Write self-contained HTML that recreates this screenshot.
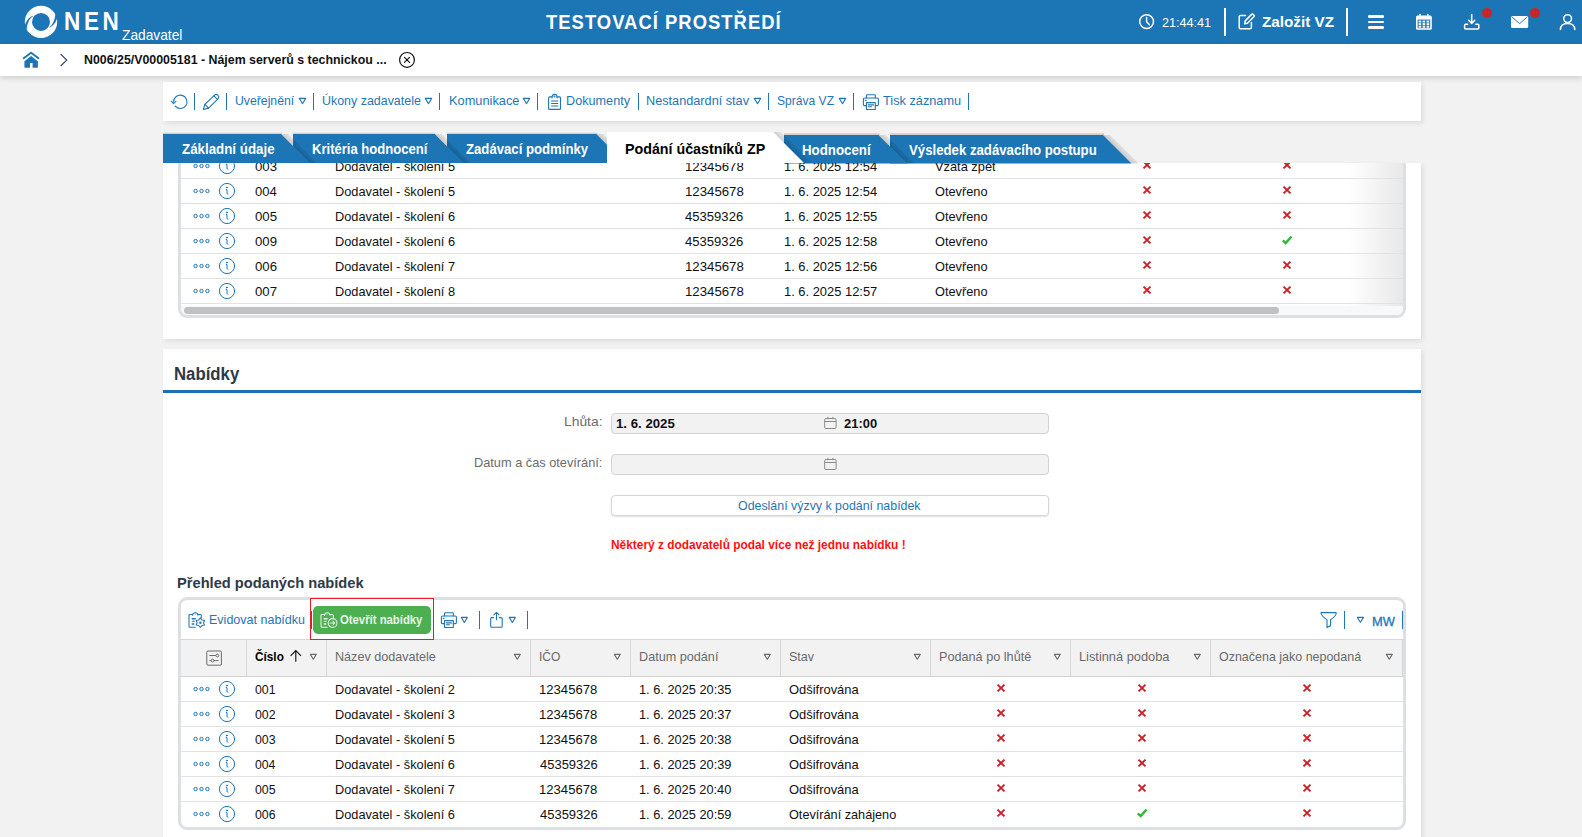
<!DOCTYPE html>
<html lang="cs"><head><meta charset="utf-8"><title>NEN - Zadavatel</title>
<style>
html,body{margin:0;padding:0}
body{width:1582px;height:837px;overflow:hidden;background:#f2f2f2;font-family:"Liberation Sans", sans-serif;position:relative}
#root{position:absolute;left:0;top:0;width:1582px;height:837px;overflow:hidden}
#root div,#root svg{position:absolute;box-sizing:border-box}
#root span{position:absolute;white-space:nowrap;line-height:1;display:block;transform-origin:0 0}
</style></head><body><div id="root">
<div style="left:0px;top:0px;width:1582px;height:44px;background:#1c75b4"></div>
<svg style="left:22px;top:3px" width="38" height="38" viewBox="22 3 38 38">
<circle cx="41" cy="21.9" r="12.6" fill="none" stroke="#fff" stroke-width="7.2"/>
<path d="M24.2 28.2 C25.5 21.5 28.5 17.5 33.6 15.6 C29.6 18.6 27.4 22.4 26.6 29.5 Z" fill="#1c75b4"/>
<path d="M57.8 15.6 C56.5 22.3 53.5 26.3 48.4 28.2 C52.4 25.2 54.6 21.4 55.4 14.3 Z" fill="#1c75b4"/>
</svg>
<svg style="left:1137px;top:12px" width="20" height="20" viewBox="0 0 20 20" fill="none" stroke="#fff" stroke-width="1.5" stroke-linecap="round">
<circle cx="9.6" cy="9.6" r="6.9"/><path d="M9.6 5.6 V9.8 L12.2 12.6"/></svg>
<div style="left:1224px;top:8px;width:2px;height:28px;background:#fff"></div>
<svg style="left:1237px;top:12px" width="20" height="20" viewBox="0 0 20 20" fill="none" stroke="#fff" stroke-width="1.5" stroke-linejoin="round" stroke-linecap="round">
<path d="M8.5 3.6 H3.4 Q2.2 3.6 2.2 4.8 V15.6 Q2.2 16.8 3.4 16.8 H13.2 Q14.4 16.8 14.4 15.6 V10.5"/>
<path d="M7.6 11.8 L8.2 8.9 L14.6 2.4 Q15.4 1.7 16.3 2.5 L16.9 3.1 Q17.6 3.9 16.9 4.7 L10.4 11.2 Z"/></svg>
<div style="left:1346px;top:8px;width:2px;height:28px;background:#fff"></div>
<div style="left:1368px;top:15.3px;width:16.4px;height:2.7px;background:#fff;border-radius:1.3px"></div>
<div style="left:1368px;top:20.8px;width:16.4px;height:2.7px;background:#fff;border-radius:1.3px"></div>
<div style="left:1368px;top:26.3px;width:16.4px;height:2.7px;background:#fff;border-radius:1.3px"></div>
<svg style="left:1415px;top:13px" width="18" height="18" viewBox="0 0 18 18">
<rect x="1" y="2.6" width="15.8" height="14.2" rx="1.6" fill="#fff"/>
<rect x="4.2" y="0.8" width="1.6" height="3.6" rx=".8" fill="#fff"/><rect x="12" y="0.8" width="1.6" height="3.6" rx=".8" fill="#fff"/>
<rect x="2.6" y="6.6" width="12.6" height="8.6" fill="#1c75b4"/>
<g fill="#fff"><rect x="3.6" y="7.6" width="2.6" height="1.9"/><rect x="7.6" y="7.6" width="2.6" height="1.9"/><rect x="11.6" y="7.6" width="2.6" height="1.9"/>
<rect x="3.6" y="10.2" width="2.6" height="1.9"/><rect x="7.6" y="10.2" width="2.6" height="1.9"/><rect x="11.6" y="10.2" width="2.6" height="1.9"/>
<rect x="3.6" y="12.8" width="2.6" height="1.9"/><rect x="7.6" y="12.8" width="2.6" height="1.9"/><rect x="11.6" y="12.8" width="2.6" height="1.9"/></g></svg>
<svg style="left:1463px;top:13px" width="18" height="18" viewBox="0 0 18 18" fill="none" stroke="#fff" stroke-width="1.5" stroke-linecap="round" stroke-linejoin="round">
<path d="M8.7 1.6 V10.2 M5.6 7.3 L8.7 10.4 L11.8 7.3"/>
<path d="M4.6 11.2 H2.6 Q1.6 11.2 1.6 12.2 V15 Q1.6 16 2.6 16 H14.8 Q15.8 16 15.8 15 V12.2 Q15.8 11.2 14.8 11.2 H12.8"/></svg>
<div style="left:1482px;top:8px;width:10.4px;height:10.4px;background:#c62828;border-radius:50%"></div>
<svg style="left:1510px;top:15px" width="20" height="14" viewBox="0 0 20 14">
<rect x="1" y="1" width="17.2" height="12" rx="1.6" fill="#fff"/>
<path d="M2 2 L9.6 8.6 L17.2 2" fill="none" stroke="#1c75b4" stroke-width="1"/></svg>
<div style="left:1530px;top:8px;width:10.4px;height:10.4px;background:#c62828;border-radius:50%"></div>
<svg style="left:1558px;top:13px" width="20" height="18" viewBox="0 0 20 18" fill="none" stroke="#fff" stroke-width="1.5" stroke-linecap="round">
<circle cx="9.6" cy="5.6" r="3.9"/><path d="M2.4 16.6 Q2.6 10.6 9.6 10.6 Q16.6 10.6 16.8 16.6"/></svg>
<div style="left:0px;top:44px;width:1582px;height:32px;background:#fff;box-shadow:0 2px 6px rgba(0,0,0,.16)"></div>
<svg style="left:22px;top:51px" width="18" height="18" viewBox="0 0 18 18">
<path d="M1.7 7.2 L9.1 1.75 L16.5 7.2" fill="none" stroke="#1c75b4" stroke-width="1.9" stroke-linecap="round" stroke-linejoin="round"/>
<path d="M2.4 10.2 L9.1 5.05 L15.9 10.2 V16.1 Q15.9 16.8 15.2 16.8 H10.6 V11.9 H8 V16.8 H3.1 Q2.4 16.8 2.4 16.1 Z" fill="#1c75b4"/></svg>
<svg style="left:59px;top:53px" width="10" height="15" viewBox="0 0 10 15"><path d="M1.7 1.1 L7.7 7.1 L1.7 13" fill="none" stroke="#2f3b68" stroke-width="1.1"/></svg>
<svg style="left:398px;top:51px" width="18" height="18" viewBox="0 0 18 18" fill="none" stroke="#111" stroke-width="1.2" stroke-linecap="round">
<circle cx="9" cy="8.9" r="7.4"/><path d="M6.5 6.4 L11.5 11.4 M11.5 6.4 L6.5 11.4"/></svg>
<div style="left:163px;top:82px;width:1258px;height:39px;background:#fff;box-shadow:2px 2px 5px rgba(0,0,0,.09)"></div>
<svg style="left:170px;top:92px" width="20" height="20" viewBox="170 92 20 20" fill="none" stroke="#1f76b6" stroke-width="1.1" stroke-linecap="round" stroke-linejoin="round">
<path d="M173.6 102 A6.7 6.7 0 1 1 175.2 106.2"/><path d="M171.2 101.2 L173.5 103.6 L176 101.4"/></svg>
<div style="left:194px;top:93px;width:1px;height:17px;background:#1f76b6"></div>
<svg style="left:201px;top:92px" width="20" height="20" viewBox="201 92 20 20" fill="none" stroke="#1f76b6" stroke-width="1.1" stroke-linecap="round" stroke-linejoin="round">
<path d="M203.3 109.5 L204.9 104.3 L214.6 95.1 Q216.4 93.7 218 95.3 Q219.6 96.9 218.2 98.6 L208.6 108.1 Z"/>
<path d="M204.9 104.3 L208.6 108.1 M213.9 95.8 L217.5 99.3"/></svg>
<div style="left:226px;top:93px;width:1px;height:17px;background:#1f76b6"></div>
<svg style="left:297.6px;top:97.2px" width="9" height="8" viewBox="-1 -1 9 8"><path d="M0.3 0.4 H6.7 L3.5 5.7 Z" fill="none" stroke="#1f76b6" stroke-width="1.1" stroke-linejoin="round"/></svg>
<div style="left:313px;top:93px;width:1px;height:17px;background:#1f76b6"></div>
<svg style="left:424.2px;top:97.2px" width="9" height="8" viewBox="-1 -1 9 8"><path d="M0.3 0.4 H6.7 L3.5 5.7 Z" fill="none" stroke="#1f76b6" stroke-width="1.1" stroke-linejoin="round"/></svg>
<div style="left:439px;top:93px;width:1px;height:17px;background:#1f76b6"></div>
<svg style="left:522.4px;top:97.2px" width="9" height="8" viewBox="-1 -1 9 8"><path d="M0.3 0.4 H6.7 L3.5 5.7 Z" fill="none" stroke="#1f76b6" stroke-width="1.1" stroke-linejoin="round"/></svg>
<div style="left:537px;top:93px;width:1px;height:17px;background:#1f76b6"></div>
<svg style="left:546px;top:92px" width="18" height="20" viewBox="546 92 18 20" fill="none" stroke="#1f76b6" stroke-width="1.1" stroke-linejoin="round" stroke-linecap="round">
<path d="M552 96.9 H549.6 Q548.6 96.9 548.6 97.9 V108.4 Q548.6 109.4 549.6 109.4 H559.5 Q560.5 109.4 560.5 108.4 V97.9 Q560.5 96.9 559.5 96.9 H557.2"/>
<path d="M552 97.9 Q552 94.4 554.6 94.4 Q557.2 94.4 557.2 97.9"/>
<path d="M551.6 101 H557.8 M551.6 103.5 H557.8 M551.6 106 H557.8"/><circle cx="554.6" cy="96.5" r=".4"/></svg>
<div style="left:638px;top:93px;width:1px;height:17px;background:#1f76b6"></div>
<svg style="left:752.8px;top:97.2px" width="9" height="8" viewBox="-1 -1 9 8"><path d="M0.3 0.4 H6.7 L3.5 5.7 Z" fill="none" stroke="#1f76b6" stroke-width="1.1" stroke-linejoin="round"/></svg>
<div style="left:768px;top:93px;width:1px;height:17px;background:#1f76b6"></div>
<svg style="left:838.2px;top:97.2px" width="9" height="8" viewBox="-1 -1 9 8"><path d="M0.3 0.4 H6.7 L3.5 5.7 Z" fill="none" stroke="#1f76b6" stroke-width="1.1" stroke-linejoin="round"/></svg>
<div style="left:853px;top:93px;width:1px;height:17px;background:#1f76b6"></div>
<svg style="left:862px;top:93px" width="18" height="18" viewBox="0 0 18 18" fill="none" stroke="#1f76b6" stroke-width="1.1" stroke-linejoin="round" stroke-linecap="round">
<path d="M4.5 5 V2.5 Q4.5 1.7 5.3 1.7 H12.5 Q13.3 1.7 13.3 2.5 V5"/>
<path d="M4.5 12.6 H2.5 Q1.4 12.6 1.4 11.5 V6.1 Q1.4 5 2.5 5 H15.3 Q16.4 5 16.4 6.1 V11.5 Q16.4 12.6 15.3 12.6 H13.3"/>
<path d="M4.5 9.6 H13.3 V16.5 H4.5 Z"/><path d="M6.3 11.9 H11.5 M6.3 13.8 H9.6 M3.3 7.4 H4.1"/></svg>
<div style="left:968px;top:93px;width:1px;height:17px;background:#1f76b6"></div>
<div style="left:163px;top:163px;width:1258px;height:176px;background:#fff;box-shadow:2px 2px 5px rgba(0,0,0,.09)"></div>
<div style="left:163px;top:163px;width:1258px;height:176px;overflow:hidden"><div style="left:15px;top:-23px;width:1228px;height:178px;border:3px solid #dde0e2;border-radius:9px;background:#fff;overflow:hidden"><div style="left:1167px;top:0;width:55px;height:163px;background:linear-gradient(90deg,rgba(236,236,236,0),rgba(232,232,232,1))"></div><div style="left:0;top:163px;width:1222px;height:9px;background:#f8f8f8"></div><div style="left:3px;top:163.6px;width:1095px;height:7.8px;border-radius:4px;background:#c1c1c1"></div></div></div>
<div style="left:181px;top:178px;width:1222px;height:1px;background:#e2e2e2"></div>
<svg style="left:192.6px;top:161.6px" width="18" height="8" viewBox="0 0 18 8" fill="none" stroke="#1f76b6" stroke-width="1"><circle cx="2.6" cy="4" r="1.7"/><circle cx="8.5" cy="4" r="1.7"/><circle cx="14.4" cy="4" r="1.7"/></svg>
<svg style="left:218px;top:156.7px" width="18" height="18" viewBox="0 0 18 18" fill="none" stroke="#1f76b6" stroke-width="1" stroke-linecap="round"><circle cx="9" cy="9" r="7.6"/><path d="M8.2 7.6 H9 V11.4 Q9 12.2 10 12.2" /><circle cx="8.9" cy="5.6" r=".5" fill="#1f76b6"/></svg>
<svg style="left:1141.2px;top:159px;clip-path:inset(4px 0 0 0)" width="12" height="12" viewBox="-6 -6 12 12"><path d="M-3.5 -3.4 L3.5 3.4 M3.5 -3.4 L-3.5 3.4" stroke="#cc2028" stroke-width="2" fill="none"/></svg>
<svg style="left:1281.3px;top:159px;clip-path:inset(4px 0 0 0)" width="12" height="12" viewBox="-6 -6 12 12"><path d="M-3.5 -3.4 L3.5 3.4 M3.5 -3.4 L-3.5 3.4" stroke="#cc2028" stroke-width="2" fill="none"/></svg>
<div style="left:181px;top:203px;width:1222px;height:1px;background:#e2e2e2"></div>
<svg style="left:192.6px;top:186.6px" width="18" height="8" viewBox="0 0 18 8" fill="none" stroke="#1f76b6" stroke-width="1"><circle cx="2.6" cy="4" r="1.7"/><circle cx="8.5" cy="4" r="1.7"/><circle cx="14.4" cy="4" r="1.7"/></svg>
<svg style="left:218px;top:181.7px" width="18" height="18" viewBox="0 0 18 18" fill="none" stroke="#1f76b6" stroke-width="1" stroke-linecap="round"><circle cx="9" cy="9" r="7.6"/><path d="M8.2 7.6 H9 V11.4 Q9 12.2 10 12.2" /><circle cx="8.9" cy="5.6" r=".5" fill="#1f76b6"/></svg>
<svg style="left:1141.2px;top:184px" width="12" height="12" viewBox="-6 -6 12 12"><path d="M-3.5 -3.4 L3.5 3.4 M3.5 -3.4 L-3.5 3.4" stroke="#cc2028" stroke-width="2" fill="none"/></svg>
<svg style="left:1281.3px;top:184px" width="12" height="12" viewBox="-6 -6 12 12"><path d="M-3.5 -3.4 L3.5 3.4 M3.5 -3.4 L-3.5 3.4" stroke="#cc2028" stroke-width="2" fill="none"/></svg>
<div style="left:181px;top:228px;width:1222px;height:1px;background:#e2e2e2"></div>
<svg style="left:192.6px;top:211.6px" width="18" height="8" viewBox="0 0 18 8" fill="none" stroke="#1f76b6" stroke-width="1"><circle cx="2.6" cy="4" r="1.7"/><circle cx="8.5" cy="4" r="1.7"/><circle cx="14.4" cy="4" r="1.7"/></svg>
<svg style="left:218px;top:206.7px" width="18" height="18" viewBox="0 0 18 18" fill="none" stroke="#1f76b6" stroke-width="1" stroke-linecap="round"><circle cx="9" cy="9" r="7.6"/><path d="M8.2 7.6 H9 V11.4 Q9 12.2 10 12.2" /><circle cx="8.9" cy="5.6" r=".5" fill="#1f76b6"/></svg>
<svg style="left:1141.2px;top:209px" width="12" height="12" viewBox="-6 -6 12 12"><path d="M-3.5 -3.4 L3.5 3.4 M3.5 -3.4 L-3.5 3.4" stroke="#cc2028" stroke-width="2" fill="none"/></svg>
<svg style="left:1281.3px;top:209px" width="12" height="12" viewBox="-6 -6 12 12"><path d="M-3.5 -3.4 L3.5 3.4 M3.5 -3.4 L-3.5 3.4" stroke="#cc2028" stroke-width="2" fill="none"/></svg>
<div style="left:181px;top:253px;width:1222px;height:1px;background:#e2e2e2"></div>
<svg style="left:192.6px;top:236.6px" width="18" height="8" viewBox="0 0 18 8" fill="none" stroke="#1f76b6" stroke-width="1"><circle cx="2.6" cy="4" r="1.7"/><circle cx="8.5" cy="4" r="1.7"/><circle cx="14.4" cy="4" r="1.7"/></svg>
<svg style="left:218px;top:231.7px" width="18" height="18" viewBox="0 0 18 18" fill="none" stroke="#1f76b6" stroke-width="1" stroke-linecap="round"><circle cx="9" cy="9" r="7.6"/><path d="M8.2 7.6 H9 V11.4 Q9 12.2 10 12.2" /><circle cx="8.9" cy="5.6" r=".5" fill="#1f76b6"/></svg>
<svg style="left:1141.2px;top:234px" width="12" height="12" viewBox="-6 -6 12 12"><path d="M-3.5 -3.4 L3.5 3.4 M3.5 -3.4 L-3.5 3.4" stroke="#cc2028" stroke-width="2" fill="none"/></svg>
<svg style="left:1280.3px;top:234px" width="14" height="12" viewBox="-7 -6 14 12"><path d="M-4.2 0.4 L-1.3 3 L4.5 -3.5" stroke="#2db534" stroke-width="2.3" fill="none"/></svg>
<div style="left:181px;top:278px;width:1222px;height:1px;background:#e2e2e2"></div>
<svg style="left:192.6px;top:261.6px" width="18" height="8" viewBox="0 0 18 8" fill="none" stroke="#1f76b6" stroke-width="1"><circle cx="2.6" cy="4" r="1.7"/><circle cx="8.5" cy="4" r="1.7"/><circle cx="14.4" cy="4" r="1.7"/></svg>
<svg style="left:218px;top:256.7px" width="18" height="18" viewBox="0 0 18 18" fill="none" stroke="#1f76b6" stroke-width="1" stroke-linecap="round"><circle cx="9" cy="9" r="7.6"/><path d="M8.2 7.6 H9 V11.4 Q9 12.2 10 12.2" /><circle cx="8.9" cy="5.6" r=".5" fill="#1f76b6"/></svg>
<svg style="left:1141.2px;top:259px" width="12" height="12" viewBox="-6 -6 12 12"><path d="M-3.5 -3.4 L3.5 3.4 M3.5 -3.4 L-3.5 3.4" stroke="#cc2028" stroke-width="2" fill="none"/></svg>
<svg style="left:1281.3px;top:259px" width="12" height="12" viewBox="-6 -6 12 12"><path d="M-3.5 -3.4 L3.5 3.4 M3.5 -3.4 L-3.5 3.4" stroke="#cc2028" stroke-width="2" fill="none"/></svg>
<div style="left:181px;top:303px;width:1222px;height:1px;background:#e2e2e2"></div>
<svg style="left:192.6px;top:286.6px" width="18" height="8" viewBox="0 0 18 8" fill="none" stroke="#1f76b6" stroke-width="1"><circle cx="2.6" cy="4" r="1.7"/><circle cx="8.5" cy="4" r="1.7"/><circle cx="14.4" cy="4" r="1.7"/></svg>
<svg style="left:218px;top:281.7px" width="18" height="18" viewBox="0 0 18 18" fill="none" stroke="#1f76b6" stroke-width="1" stroke-linecap="round"><circle cx="9" cy="9" r="7.6"/><path d="M8.2 7.6 H9 V11.4 Q9 12.2 10 12.2" /><circle cx="8.9" cy="5.6" r=".5" fill="#1f76b6"/></svg>
<svg style="left:1141.2px;top:284px" width="12" height="12" viewBox="-6 -6 12 12"><path d="M-3.5 -3.4 L3.5 3.4 M3.5 -3.4 L-3.5 3.4" stroke="#cc2028" stroke-width="2" fill="none"/></svg>
<svg style="left:1281.3px;top:284px" width="12" height="12" viewBox="-6 -6 12 12"><path d="M-3.5 -3.4 L3.5 3.4 M3.5 -3.4 L-3.5 3.4" stroke="#cc2028" stroke-width="2" fill="none"/></svg>
<svg style="left:884.2px;top:128px" width="265.0" height="37" viewBox="884.2 128 265.0 37"><defs><linearGradient id="sg890" gradientUnits="userSpaceOnUse" x1="1103.2" y1="135" x2="1109.2" y2="129"><stop offset="0" stop-color="#000" stop-opacity=".17"/><stop offset="1" stop-color="#000" stop-opacity="0"/></linearGradient></defs><path d="M1103.2 135 L1132.2 163.6 L1139.2 163.6 L1110.2 135 Z" fill="url(#sg890)"/><path d="M890.2 134.4 H1104.2" stroke="#cdc5bd" stroke-width="2.2" opacity=".8"/><path d="M890.2 135 H1103.2 L1131.8 163.6 H890.2 Z" fill="#1c75b4"/></svg>
<svg style="left:778px;top:128px" width="146.5" height="37" viewBox="778 128 146.5 37"><defs><linearGradient id="sg784" gradientUnits="userSpaceOnUse" x1="878.5" y1="135" x2="884.5" y2="129"><stop offset="0" stop-color="#000" stop-opacity=".17"/><stop offset="1" stop-color="#000" stop-opacity="0"/></linearGradient></defs><path d="M878.5 135 L907.5 163.6 L914.5 163.6 L885.5 135 Z" fill="url(#sg784)"/><path d="M784 134.4 H879.5" stroke="#cdc5bd" stroke-width="2.2" opacity=".8"/><path d="M784 135 H878.5 L907.0999999999999 163.6 H784 Z" fill="#1c75b4"/></svg>
<svg style="left:440.7px;top:128px" width="201.3" height="37" viewBox="440.7 128 201.3 37"><defs><linearGradient id="sg446" gradientUnits="userSpaceOnUse" x1="596" y1="134" x2="602" y2="128"><stop offset="0" stop-color="#000" stop-opacity=".17"/><stop offset="1" stop-color="#000" stop-opacity="0"/></linearGradient></defs><path d="M596 134 L625 163.0 L632 163.0 L603 134 Z" fill="url(#sg446)"/><path d="M446.7 133.4 H597" stroke="#cdc5bd" stroke-width="1.2" opacity=".8"/><path d="M446.7 134 H596 L625.0 163.0 H446.7 Z" fill="#1c75b4"/></svg>
<svg style="left:287px;top:128px" width="193.60000000000002" height="37" viewBox="287 128 193.60000000000002 37"><defs><linearGradient id="sg293" gradientUnits="userSpaceOnUse" x1="434.6" y1="134" x2="440.6" y2="128"><stop offset="0" stop-color="#000" stop-opacity=".17"/><stop offset="1" stop-color="#000" stop-opacity="0"/></linearGradient></defs><path d="M434.6 134 L463.6 163.0 L470.6 163.0 L441.6 134 Z" fill="url(#sg293)"/><path d="M293 133.4 H435.6" stroke="#cdc5bd" stroke-width="1.2" opacity=".8"/><path d="M293 134 H434.6 L463.6 163.0 H293 Z" fill="#1c75b4"/></svg>
<svg style="left:157px;top:128px" width="170" height="37" viewBox="157 128 170 37"><defs><linearGradient id="sg163" gradientUnits="userSpaceOnUse" x1="281" y1="134" x2="287" y2="128"><stop offset="0" stop-color="#000" stop-opacity=".17"/><stop offset="1" stop-color="#000" stop-opacity="0"/></linearGradient></defs><path d="M281 134 L310 163.0 L317 163.0 L288 134 Z" fill="url(#sg163)"/><path d="M163 133.4 H282" stroke="#cdc5bd" stroke-width="1.2" opacity=".8"/><path d="M163 134 H281 L310.0 163.0 H163 Z" fill="#1c75b4"/></svg>
<svg style="left:600px;top:126px" width="215" height="38" viewBox="600 126 215 38"><defs><linearGradient id="sga" gradientUnits="userSpaceOnUse" x1="773" y1="132" x2="779" y2="126"><stop offset="0" stop-color="#000" stop-opacity=".15"/><stop offset="1" stop-color="#000" stop-opacity="0"/></linearGradient></defs><path d="M773 132 L804 163 L812 163 L781 132 Z" fill="url(#sga)"/><path d="M607 132 H773 L804 163 H607 Z" fill="#fff"/></svg>
<div style="left:163px;top:349px;width:1258px;height:500px;background:#fff;box-shadow:2px 2px 5px rgba(0,0,0,.09)"></div>
<div style="left:163px;top:390px;width:1258px;height:3px;background:#1a70b2"></div>
<div style="left:611px;top:413px;width:438px;height:21px;border:1px solid #d2d2d2;border-radius:4px;background:#f2f2f2"></div>
<div style="left:611px;top:454px;width:438px;height:21px;border:1px solid #d2d2d2;border-radius:4px;background:#f2f2f2"></div>
<svg style="left:822.5px;top:416px" width="14" height="14" viewBox="0 0 14 14" fill="none" stroke="#8a8a8a" stroke-width="1"><rect x="1.7" y="2.5" width="11.4" height="10" rx="1.2"/><path d="M1.7 5.5 H13.1 M4.9 .9 V3.2 M9.9 .9 V3.2"/></svg>
<svg style="left:822.5px;top:457px" width="14" height="14" viewBox="0 0 14 14" fill="none" stroke="#8a8a8a" stroke-width="1"><rect x="1.7" y="2.5" width="11.4" height="10" rx="1.2"/><path d="M1.7 5.5 H13.1 M4.9 .9 V3.2 M9.9 .9 V3.2"/></svg>
<div style="left:611px;top:495px;width:438px;height:21px;border:1px solid #d6d6d6;border-radius:4px;background:#fff;box-shadow:0 1px 2px rgba(0,0,0,.12)"></div>
<div style="left:178px;top:597px;width:1228px;height:233px;border:3px solid #dde0e2;border-radius:9px;background:#fff"></div>
<div style="left:181px;top:639px;width:1222px;height:38px;background:#f2f2f2;border-top:1px solid #d6d6d6;border-bottom:1.5px solid #d0d0d0"></div>
<div style="left:246px;top:640px;width:1px;height:36px;background:#d6d6d6"></div>
<div style="left:326px;top:640px;width:1px;height:36px;background:#d6d6d6"></div>
<div style="left:530px;top:640px;width:1px;height:36px;background:#d6d6d6"></div>
<div style="left:630px;top:640px;width:1px;height:36px;background:#d6d6d6"></div>
<div style="left:780px;top:640px;width:1px;height:36px;background:#d6d6d6"></div>
<div style="left:930px;top:640px;width:1px;height:36px;background:#d6d6d6"></div>
<div style="left:1070px;top:640px;width:1px;height:36px;background:#d6d6d6"></div>
<div style="left:1210px;top:640px;width:1px;height:36px;background:#d6d6d6"></div>
<div style="left:1402px;top:640px;width:1px;height:36px;background:#d6d6d6"></div>
<svg style="left:205px;top:649px" width="18" height="18" viewBox="0 0 18 18" fill="none" stroke="#6a6a6a" stroke-width="1"><rect x="1.8" y="2" width="14.6" height="14.2" rx="1.2"/><path d="M4.4 6.5 H10.8 M4.4 11.6 H6.2 M9 11.6 H13.6"/><circle cx="12.3" cy="6.5" r="1.4"/><circle cx="7.6" cy="11.6" r="1.4"/></svg>
<svg style="left:289px;top:649px" width="14" height="14" viewBox="0 0 14 14" fill="none" stroke="#111" stroke-width="1.1"><path d="M6.8 1.6 V12.8 M1.6 6.8 L6.8 1.6 L12 6.8"/></svg>
<svg style="left:309px;top:652.6px" width="8.6" height="7.6" viewBox="-1 -1 8.6 7.6"><path d="M0.3 0.4 H6.3 L3.3 5.3 Z" fill="none" stroke="#6a6a6a" stroke-width="1.1" stroke-linejoin="round"/></svg>
<svg style="left:512.6px;top:652.6px" width="8.6" height="7.6" viewBox="-1 -1 8.6 7.6"><path d="M0.3 0.4 H6.3 L3.3 5.3 Z" fill="none" stroke="#6a6a6a" stroke-width="1.1" stroke-linejoin="round"/></svg>
<svg style="left:612.8px;top:652.6px" width="8.6" height="7.6" viewBox="-1 -1 8.6 7.6"><path d="M0.3 0.4 H6.3 L3.3 5.3 Z" fill="none" stroke="#6a6a6a" stroke-width="1.1" stroke-linejoin="round"/></svg>
<svg style="left:762.6px;top:652.6px" width="8.6" height="7.6" viewBox="-1 -1 8.6 7.6"><path d="M0.3 0.4 H6.3 L3.3 5.3 Z" fill="none" stroke="#6a6a6a" stroke-width="1.1" stroke-linejoin="round"/></svg>
<svg style="left:912.5px;top:652.6px" width="8.6" height="7.6" viewBox="-1 -1 8.6 7.6"><path d="M0.3 0.4 H6.3 L3.3 5.3 Z" fill="none" stroke="#6a6a6a" stroke-width="1.1" stroke-linejoin="round"/></svg>
<svg style="left:1052.5px;top:652.6px" width="8.6" height="7.6" viewBox="-1 -1 8.6 7.6"><path d="M0.3 0.4 H6.3 L3.3 5.3 Z" fill="none" stroke="#6a6a6a" stroke-width="1.1" stroke-linejoin="round"/></svg>
<svg style="left:1192.5px;top:652.6px" width="8.6" height="7.6" viewBox="-1 -1 8.6 7.6"><path d="M0.3 0.4 H6.3 L3.3 5.3 Z" fill="none" stroke="#6a6a6a" stroke-width="1.1" stroke-linejoin="round"/></svg>
<svg style="left:1384.7px;top:652.6px" width="8.6" height="7.6" viewBox="-1 -1 8.6 7.6"><path d="M0.3 0.4 H6.3 L3.3 5.3 Z" fill="none" stroke="#6a6a6a" stroke-width="1.1" stroke-linejoin="round"/></svg>
<div style="left:181px;top:701px;width:1222px;height:1px;background:#e2e2e2"></div>
<svg style="left:192.6px;top:685.1px" width="18" height="8" viewBox="0 0 18 8" fill="none" stroke="#1f76b6" stroke-width="1"><circle cx="2.6" cy="4" r="1.7"/><circle cx="8.5" cy="4" r="1.7"/><circle cx="14.4" cy="4" r="1.7"/></svg>
<svg style="left:218px;top:680.1px" width="18" height="18" viewBox="0 0 18 18" fill="none" stroke="#1f76b6" stroke-width="1" stroke-linecap="round"><circle cx="9" cy="9" r="7.6"/><path d="M8.2 7.6 H9 V11.4 Q9 12.2 10 12.2" /><circle cx="8.9" cy="5.6" r=".5" fill="#1f76b6"/></svg>
<svg style="left:995.2px;top:682.1px" width="12" height="12" viewBox="-6 -6 12 12"><path d="M-3.5 -3.4 L3.5 3.4 M3.5 -3.4 L-3.5 3.4" stroke="#cc2028" stroke-width="2" fill="none"/></svg>
<svg style="left:1135.6px;top:682.1px" width="12" height="12" viewBox="-6 -6 12 12"><path d="M-3.5 -3.4 L3.5 3.4 M3.5 -3.4 L-3.5 3.4" stroke="#cc2028" stroke-width="2" fill="none"/></svg>
<svg style="left:1301.3px;top:682.1px" width="12" height="12" viewBox="-6 -6 12 12"><path d="M-3.5 -3.4 L3.5 3.4 M3.5 -3.4 L-3.5 3.4" stroke="#cc2028" stroke-width="2" fill="none"/></svg>
<div style="left:181px;top:726px;width:1222px;height:1px;background:#e2e2e2"></div>
<svg style="left:192.6px;top:710.1px" width="18" height="8" viewBox="0 0 18 8" fill="none" stroke="#1f76b6" stroke-width="1"><circle cx="2.6" cy="4" r="1.7"/><circle cx="8.5" cy="4" r="1.7"/><circle cx="14.4" cy="4" r="1.7"/></svg>
<svg style="left:218px;top:705.1px" width="18" height="18" viewBox="0 0 18 18" fill="none" stroke="#1f76b6" stroke-width="1" stroke-linecap="round"><circle cx="9" cy="9" r="7.6"/><path d="M8.2 7.6 H9 V11.4 Q9 12.2 10 12.2" /><circle cx="8.9" cy="5.6" r=".5" fill="#1f76b6"/></svg>
<svg style="left:995.2px;top:707.1px" width="12" height="12" viewBox="-6 -6 12 12"><path d="M-3.5 -3.4 L3.5 3.4 M3.5 -3.4 L-3.5 3.4" stroke="#cc2028" stroke-width="2" fill="none"/></svg>
<svg style="left:1135.6px;top:707.1px" width="12" height="12" viewBox="-6 -6 12 12"><path d="M-3.5 -3.4 L3.5 3.4 M3.5 -3.4 L-3.5 3.4" stroke="#cc2028" stroke-width="2" fill="none"/></svg>
<svg style="left:1301.3px;top:707.1px" width="12" height="12" viewBox="-6 -6 12 12"><path d="M-3.5 -3.4 L3.5 3.4 M3.5 -3.4 L-3.5 3.4" stroke="#cc2028" stroke-width="2" fill="none"/></svg>
<div style="left:181px;top:751px;width:1222px;height:1px;background:#e2e2e2"></div>
<svg style="left:192.6px;top:735.1px" width="18" height="8" viewBox="0 0 18 8" fill="none" stroke="#1f76b6" stroke-width="1"><circle cx="2.6" cy="4" r="1.7"/><circle cx="8.5" cy="4" r="1.7"/><circle cx="14.4" cy="4" r="1.7"/></svg>
<svg style="left:218px;top:730.1px" width="18" height="18" viewBox="0 0 18 18" fill="none" stroke="#1f76b6" stroke-width="1" stroke-linecap="round"><circle cx="9" cy="9" r="7.6"/><path d="M8.2 7.6 H9 V11.4 Q9 12.2 10 12.2" /><circle cx="8.9" cy="5.6" r=".5" fill="#1f76b6"/></svg>
<svg style="left:995.2px;top:732.1px" width="12" height="12" viewBox="-6 -6 12 12"><path d="M-3.5 -3.4 L3.5 3.4 M3.5 -3.4 L-3.5 3.4" stroke="#cc2028" stroke-width="2" fill="none"/></svg>
<svg style="left:1135.6px;top:732.1px" width="12" height="12" viewBox="-6 -6 12 12"><path d="M-3.5 -3.4 L3.5 3.4 M3.5 -3.4 L-3.5 3.4" stroke="#cc2028" stroke-width="2" fill="none"/></svg>
<svg style="left:1301.3px;top:732.1px" width="12" height="12" viewBox="-6 -6 12 12"><path d="M-3.5 -3.4 L3.5 3.4 M3.5 -3.4 L-3.5 3.4" stroke="#cc2028" stroke-width="2" fill="none"/></svg>
<div style="left:181px;top:776px;width:1222px;height:1px;background:#e2e2e2"></div>
<svg style="left:192.6px;top:760.1px" width="18" height="8" viewBox="0 0 18 8" fill="none" stroke="#1f76b6" stroke-width="1"><circle cx="2.6" cy="4" r="1.7"/><circle cx="8.5" cy="4" r="1.7"/><circle cx="14.4" cy="4" r="1.7"/></svg>
<svg style="left:218px;top:755.1px" width="18" height="18" viewBox="0 0 18 18" fill="none" stroke="#1f76b6" stroke-width="1" stroke-linecap="round"><circle cx="9" cy="9" r="7.6"/><path d="M8.2 7.6 H9 V11.4 Q9 12.2 10 12.2" /><circle cx="8.9" cy="5.6" r=".5" fill="#1f76b6"/></svg>
<svg style="left:995.2px;top:757.1px" width="12" height="12" viewBox="-6 -6 12 12"><path d="M-3.5 -3.4 L3.5 3.4 M3.5 -3.4 L-3.5 3.4" stroke="#cc2028" stroke-width="2" fill="none"/></svg>
<svg style="left:1135.6px;top:757.1px" width="12" height="12" viewBox="-6 -6 12 12"><path d="M-3.5 -3.4 L3.5 3.4 M3.5 -3.4 L-3.5 3.4" stroke="#cc2028" stroke-width="2" fill="none"/></svg>
<svg style="left:1301.3px;top:757.1px" width="12" height="12" viewBox="-6 -6 12 12"><path d="M-3.5 -3.4 L3.5 3.4 M3.5 -3.4 L-3.5 3.4" stroke="#cc2028" stroke-width="2" fill="none"/></svg>
<div style="left:181px;top:801px;width:1222px;height:1px;background:#e2e2e2"></div>
<svg style="left:192.6px;top:785.1px" width="18" height="8" viewBox="0 0 18 8" fill="none" stroke="#1f76b6" stroke-width="1"><circle cx="2.6" cy="4" r="1.7"/><circle cx="8.5" cy="4" r="1.7"/><circle cx="14.4" cy="4" r="1.7"/></svg>
<svg style="left:218px;top:780.1px" width="18" height="18" viewBox="0 0 18 18" fill="none" stroke="#1f76b6" stroke-width="1" stroke-linecap="round"><circle cx="9" cy="9" r="7.6"/><path d="M8.2 7.6 H9 V11.4 Q9 12.2 10 12.2" /><circle cx="8.9" cy="5.6" r=".5" fill="#1f76b6"/></svg>
<svg style="left:995.2px;top:782.1px" width="12" height="12" viewBox="-6 -6 12 12"><path d="M-3.5 -3.4 L3.5 3.4 M3.5 -3.4 L-3.5 3.4" stroke="#cc2028" stroke-width="2" fill="none"/></svg>
<svg style="left:1135.6px;top:782.1px" width="12" height="12" viewBox="-6 -6 12 12"><path d="M-3.5 -3.4 L3.5 3.4 M3.5 -3.4 L-3.5 3.4" stroke="#cc2028" stroke-width="2" fill="none"/></svg>
<svg style="left:1301.3px;top:782.1px" width="12" height="12" viewBox="-6 -6 12 12"><path d="M-3.5 -3.4 L3.5 3.4 M3.5 -3.4 L-3.5 3.4" stroke="#cc2028" stroke-width="2" fill="none"/></svg>
<svg style="left:192.6px;top:810.1px" width="18" height="8" viewBox="0 0 18 8" fill="none" stroke="#1f76b6" stroke-width="1"><circle cx="2.6" cy="4" r="1.7"/><circle cx="8.5" cy="4" r="1.7"/><circle cx="14.4" cy="4" r="1.7"/></svg>
<svg style="left:218px;top:805.1px" width="18" height="18" viewBox="0 0 18 18" fill="none" stroke="#1f76b6" stroke-width="1" stroke-linecap="round"><circle cx="9" cy="9" r="7.6"/><path d="M8.2 7.6 H9 V11.4 Q9 12.2 10 12.2" /><circle cx="8.9" cy="5.6" r=".5" fill="#1f76b6"/></svg>
<svg style="left:995.2px;top:807.1px" width="12" height="12" viewBox="-6 -6 12 12"><path d="M-3.5 -3.4 L3.5 3.4 M3.5 -3.4 L-3.5 3.4" stroke="#cc2028" stroke-width="2" fill="none"/></svg>
<svg style="left:1134.6px;top:807.1px" width="14" height="12" viewBox="-7 -6 14 12"><path d="M-4.2 0.4 L-1.3 3 L4.5 -3.5" stroke="#2db534" stroke-width="2.3" fill="none"/></svg>
<svg style="left:1301.3px;top:807.1px" width="12" height="12" viewBox="-6 -6 12 12"><path d="M-3.5 -3.4 L3.5 3.4 M3.5 -3.4 L-3.5 3.4" stroke="#cc2028" stroke-width="2" fill="none"/></svg>
<svg style="left:187.35px;top:610.2px" width="21" height="20" viewBox="-2 -2 21 20" fill="none" stroke="#1f76b6" stroke-width="1.05" stroke-linejoin="round" stroke-linecap="round">
<path d="M3.6 2.4 H1 Q0 2.4 0 3.4 V14.2 Q0 15.2 1 15.2 H6.3"/><path d="M9 2.4 H11.3 Q12.3 2.4 12.3 3.4 V5.4"/>
<path d="M3.6 3.2 Q3.7 0.7 6.3 0.7 Q8.9 0.7 9 3.2"/><circle cx="6.2" cy="2.3" r=".45" fill="#1f76b6" stroke="none"/>
<path d="M3.2 6.7 H6.2" stroke-width="1.5"/><path d="M3.2 9.2 H5.4"/><path d="M3.2 11.9 H4.8" stroke-width="1.5"/><path d="M11.35 5.90 L9.75 7.93 L7.19 8.30 L8.15 10.70 L7.19 13.10 L9.75 13.47 L11.35 15.50 L12.95 13.47 L15.51 13.10 L14.55 10.70 L15.51 8.30 L12.95 7.93 Z"/><circle cx="11.35" cy="10.7" r="1.2" fill="#1f76b6" stroke="none"/></svg>
<div style="left:310px;top:598px;width:124px;height:42px;border:1.2px solid #e81c24;background:#fff"></div>
<div style="left:311px;top:611px;width:1px;height:18px;background:#1a66ad"></div>
<div style="left:313px;top:606px;width:118px;height:28px;background:#4caf50;border-radius:5px"></div>
<svg style="left:318.9px;top:610px" width="21" height="20" viewBox="-2 -2 21 20" fill="none" stroke="#e6f3e6" stroke-width="1.05" stroke-linejoin="round" stroke-linecap="round">
<path d="M3.6 2.4 H1 Q0 2.4 0 3.4 V14.2 Q0 15.2 1 15.2 H6.3"/><path d="M9 2.4 H11.3 Q12.3 2.4 12.3 3.4 V5.4"/>
<path d="M3.6 3.2 Q3.7 0.7 6.3 0.7 Q8.9 0.7 9 3.2"/><circle cx="6.2" cy="2.3" r=".45" fill="#e6f3e6" stroke="none"/>
<path d="M3.2 6.7 H6.2" stroke-width="1.5"/><path d="M3.2 9.2 H5.4"/><path d="M3.2 11.9 H4.8" stroke-width="1.5"/><circle cx="11.6" cy="11" r="4.4"/><path d="M9.2 11 H13.6 M12 9.2 L13.8 11 L12 12.8"/></svg>
<svg style="left:439.6px;top:610.8px" width="18" height="18" viewBox="0 0 18 18" fill="none" stroke="#1f76b6" stroke-width="1.1" stroke-linejoin="round" stroke-linecap="round">
<path d="M4.5 5 V2.5 Q4.5 1.7 5.3 1.7 H12.5 Q13.3 1.7 13.3 2.5 V5"/>
<path d="M4.5 12.6 H2.5 Q1.4 12.6 1.4 11.5 V6.1 Q1.4 5 2.5 5 H15.3 Q16.4 5 16.4 6.1 V11.5 Q16.4 12.6 15.3 12.6 H13.3"/>
<path d="M4.5 9.6 H13.3 V16.5 H4.5 Z"/><path d="M6.3 11.9 H11.5 M6.3 13.8 H9.6 M3.3 7.4 H4.1"/></svg>
<svg style="left:460px;top:615.9px" width="8.6" height="7.8" viewBox="-1 -1 8.6 7.8"><path d="M0.3 0.4 H6.3 L3.3 5.5 Z" fill="none" stroke="#1f76b6" stroke-width="1.1" stroke-linejoin="round"/></svg>
<div style="left:479px;top:611px;width:1px;height:18px;background:#1f76b6"></div>
<svg style="left:488px;top:610px" width="18" height="20" viewBox="0 0 18 20" fill="none" stroke="#1f76b6" stroke-width="1.1" stroke-linejoin="round" stroke-linecap="round"><path d="M5.6 7.6 H3.7 Q2.7 7.6 2.7 8.6 V16.2 Q2.7 17.2 3.7 17.2 H13.2 Q14.2 17.2 14.2 16.2 V8.6 Q14.2 7.6 13.2 7.6 H11.4"/><path d="M8.5 9.8 V2.4 M5.9 4.9 L8.5 2.3 L11.1 4.9"/></svg>
<svg style="left:507.8px;top:615.9px" width="8.6" height="7.8" viewBox="-1 -1 8.6 7.8"><path d="M0.3 0.4 H6.3 L3.3 5.5 Z" fill="none" stroke="#1f76b6" stroke-width="1.1" stroke-linejoin="round"/></svg>
<div style="left:527px;top:611px;width:1px;height:18px;background:#1f76b6"></div>
<svg style="left:1319px;top:610px" width="20" height="20" viewBox="0 0 20 20" fill="none" stroke="#1f76b6" stroke-width="1.1" stroke-linejoin="round"><path d="M2 2.6 H17.2 Q17.6 5.6 11.6 9.6 V15.8 L8 17.6 V9.6 Q1.8 5.6 2 2.6 Z"/></svg>
<div style="left:1344px;top:611px;width:1px;height:18px;background:#1f76b6"></div>
<svg style="left:1356px;top:616px" width="8.8" height="7.6" viewBox="-1 -1 8.8 7.6"><path d="M0.3 0.4 H6.5 L3.4 5.3 Z" fill="none" stroke="#1f76b6" stroke-width="1.1" stroke-linejoin="round"/></svg>
<div style="left:1402px;top:611px;width:1px;height:18px;background:#1f76b6"></div>
<span style="left:64.29px;top:9px;font-size:25px;color:#fff;font-weight:700;transform:scaleX(0.9000);letter-spacing:4.047px;">NEN</span>
<span style="left:121.57px;top:27px;font-size:15px;color:#fff;transform:scaleX(0.9159);">Zadavatel</span>
<span style="left:546.00px;top:13px;font-size:19.6px;color:#fff;font-weight:700;transform:scaleX(0.9400);letter-spacing:1.089px;">TESTOVACÍ PROSTŘEDÍ</span>
<span style="left:1162.41px;top:16px;font-size:13.5px;color:#fff;transform:scaleX(0.9344);">21:44:41</span>
<span style="left:1262.26px;top:14px;font-size:15.2px;color:#fff;font-weight:700;transform:scaleX(1.0031);">Založit VZ</span>
<span style="left:83.53px;top:53px;font-size:13.4px;color:#111;font-weight:700;transform:scaleX(0.9239);">N006/25/V00005181 - Nájem serverů s technickou ...</span>
<span style="left:234.73px;top:94px;font-size:13.4px;color:#1f76b6;transform:scaleX(0.9139);">Uveřejnění</span>
<span style="left:321.82px;top:94px;font-size:13.4px;color:#1f76b6;transform:scaleX(0.9283);">Úkony zadavatele</span>
<span style="left:448.50px;top:94px;font-size:13.4px;color:#1f76b6;transform:scaleX(0.9564);">Komunikace</span>
<span style="left:566.31px;top:94px;font-size:13.4px;color:#1f76b6;transform:scaleX(0.9457);">Dokumenty</span>
<span style="left:646.11px;top:94px;font-size:13.4px;color:#1f76b6;transform:scaleX(0.9480);">Nestandardní stav</span>
<span style="left:777.42px;top:94px;font-size:13.4px;color:#1f76b6;transform:scaleX(0.9018);">Správa VZ</span>
<span style="left:883.10px;top:94px;font-size:13.4px;color:#1f76b6;transform:scaleX(0.9520);">Tisk záznamu</span>
<span style="left:254.89px;top:160px;font-size:13.4px;color:#111;transform:scaleX(0.9862);clip-path:inset(3px 0 0 0);">003</span>
<span style="left:334.70px;top:160px;font-size:13.4px;color:#111;transform:scaleX(0.9542);clip-path:inset(3px 0 0 0);">Dodavatel - školení 5</span>
<span style="left:684.67px;top:160px;font-size:13.4px;color:#111;transform:scaleX(0.9873);clip-path:inset(3px 0 0 0);">12345678</span>
<span style="left:784.49px;top:160px;font-size:13.4px;color:#111;transform:scaleX(0.9614);clip-path:inset(3px 0 0 0);">1. 6. 2025 12:54</span>
<span style="left:935.30px;top:160px;font-size:13.4px;color:#111;transform:scaleX(0.9580);clip-path:inset(3px 0 0 0);">Vzata zpět</span>
<span style="left:254.89px;top:185px;font-size:13.4px;color:#111;transform:scaleX(0.9766);">004</span>
<span style="left:334.70px;top:185px;font-size:13.4px;color:#111;transform:scaleX(0.9542);">Dodavatel - školení 5</span>
<span style="left:684.67px;top:185px;font-size:13.4px;color:#111;transform:scaleX(0.9873);">12345678</span>
<span style="left:784.49px;top:185px;font-size:13.4px;color:#111;transform:scaleX(0.9614);">1. 6. 2025 12:54</span>
<span style="left:934.70px;top:185px;font-size:13.4px;color:#111;transform:scaleX(0.9546);">Otevřeno</span>
<span style="left:254.89px;top:210px;font-size:13.4px;color:#111;transform:scaleX(0.9862);">005</span>
<span style="left:334.70px;top:210px;font-size:13.4px;color:#111;transform:scaleX(0.9542);">Dodavatel - školení 6</span>
<span style="left:685.30px;top:210px;font-size:13.4px;color:#111;transform:scaleX(0.9768);">45359326</span>
<span style="left:784.49px;top:210px;font-size:13.4px;color:#111;transform:scaleX(0.9635);">1. 6. 2025 12:55</span>
<span style="left:934.70px;top:210px;font-size:13.4px;color:#111;transform:scaleX(0.9546);">Otevřeno</span>
<span style="left:254.89px;top:235px;font-size:13.4px;color:#111;transform:scaleX(0.9862);">009</span>
<span style="left:334.70px;top:235px;font-size:13.4px;color:#111;transform:scaleX(0.9542);">Dodavatel - školení 6</span>
<span style="left:685.30px;top:235px;font-size:13.4px;color:#111;transform:scaleX(0.9768);">45359326</span>
<span style="left:784.49px;top:235px;font-size:13.4px;color:#111;transform:scaleX(0.9635);">1. 6. 2025 12:58</span>
<span style="left:934.70px;top:235px;font-size:13.4px;color:#111;transform:scaleX(0.9546);">Otevřeno</span>
<span style="left:254.89px;top:260px;font-size:13.4px;color:#111;transform:scaleX(0.9862);">006</span>
<span style="left:334.70px;top:260px;font-size:13.4px;color:#111;transform:scaleX(0.9542);">Dodavatel - školení 7</span>
<span style="left:684.67px;top:260px;font-size:13.4px;color:#111;transform:scaleX(0.9873);">12345678</span>
<span style="left:784.49px;top:260px;font-size:13.4px;color:#111;transform:scaleX(0.9635);">1. 6. 2025 12:56</span>
<span style="left:934.70px;top:260px;font-size:13.4px;color:#111;transform:scaleX(0.9546);">Otevřeno</span>
<span style="left:254.89px;top:285px;font-size:13.4px;color:#111;transform:scaleX(0.9862);">007</span>
<span style="left:334.70px;top:285px;font-size:13.4px;color:#111;transform:scaleX(0.9542);">Dodavatel - školení 8</span>
<span style="left:684.67px;top:285px;font-size:13.4px;color:#111;transform:scaleX(0.9873);">12345678</span>
<span style="left:784.49px;top:285px;font-size:13.4px;color:#111;transform:scaleX(0.9635);">1. 6. 2025 12:57</span>
<span style="left:934.70px;top:285px;font-size:13.4px;color:#111;transform:scaleX(0.9546);">Otevřeno</span>
<span style="left:909.30px;top:143px;font-size:14.5px;color:#fff;font-weight:700;transform:scaleX(0.9101);">Výsledek zadávacího postupu</span>
<span style="left:802.27px;top:143px;font-size:14.5px;color:#fff;font-weight:700;transform:scaleX(0.9166);">Hodnocení</span>
<span style="left:465.59px;top:142px;font-size:14.5px;color:#fff;font-weight:700;transform:scaleX(0.9075);">Zadávací podmínky</span>
<span style="left:311.78px;top:142px;font-size:14.5px;color:#fff;font-weight:700;transform:scaleX(0.9006);">Kritéria hodnocení</span>
<span style="left:181.59px;top:142px;font-size:14.5px;color:#fff;font-weight:700;transform:scaleX(0.9188);">Základní údaje</span>
<span style="left:624.71px;top:141px;font-size:15px;color:#000;font-weight:700;transform:scaleX(0.9501);">Podání účastníků ZP</span>
<span style="left:174.35px;top:365px;font-size:18px;color:#2c3a46;font-weight:700;transform:scaleX(0.9317);">Nabídky</span>
<span style="left:563.62px;top:415px;font-size:13.4px;color:#6b6b6b;transform:scaleX(1.0343);">Lhůta:</span>
<span style="left:473.60px;top:456px;font-size:13.4px;color:#6b6b6b;transform:scaleX(0.9529);">Datum a čas otevírání:</span>
<span style="left:615.77px;top:417px;font-size:13.4px;color:#111;font-weight:700;transform:scaleX(0.9874);">1. 6. 2025</span>
<span style="left:844.10px;top:417px;font-size:13.4px;color:#111;font-weight:700;transform:scaleX(0.9667);">21:00</span>
<span style="left:738.42px;top:499px;font-size:13.4px;color:#1f76b6;transform:scaleX(0.9255);">Odeslání výzvy k podání nabídek</span>
<span style="left:610.56px;top:538px;font-size:13.4px;color:#ff1010;font-weight:700;transform:scaleX(0.8878);">Některý z dodavatelů podal více než jednu nabídku !</span>
<span style="left:177.38px;top:575px;font-size:15px;color:#2c3a46;font-weight:700;transform:scaleX(0.9777);">Přehled podaných nabídek</span>
<span style="left:254.93px;top:650px;font-size:13.4px;color:#000;font-weight:700;transform:scaleX(0.8808);">Číslo</span>
<span style="left:334.82px;top:650px;font-size:13.4px;color:#6a6a6a;transform:scaleX(0.9406);">Název dodavatele</span>
<span style="left:538.86px;top:650px;font-size:13.4px;color:#6a6a6a;transform:scaleX(0.8966);">IČO</span>
<span style="left:638.81px;top:650px;font-size:13.4px;color:#6a6a6a;transform:scaleX(0.9438);">Datum podání</span>
<span style="left:788.81px;top:650px;font-size:13.4px;color:#6a6a6a;transform:scaleX(0.9358);">Stav</span>
<span style="left:939.11px;top:650px;font-size:13.4px;color:#6a6a6a;transform:scaleX(0.9457);">Podaná po lhůtě</span>
<span style="left:1078.70px;top:650px;font-size:13.4px;color:#6a6a6a;transform:scaleX(0.9556);">Listinná podoba</span>
<span style="left:1219.02px;top:650px;font-size:13.4px;color:#6a6a6a;transform:scaleX(0.9311);">Označena jako nepodaná</span>
<span style="left:254.91px;top:683px;font-size:13.4px;color:#111;transform:scaleX(0.9208);">001</span>
<span style="left:334.80px;top:683px;font-size:13.4px;color:#111;transform:scaleX(0.9526);">Dodavatel - školení 2</span>
<span style="left:539.08px;top:683px;font-size:13.4px;color:#111;transform:scaleX(0.9787);">12345678</span>
<span style="left:639.20px;top:683px;font-size:13.4px;color:#111;transform:scaleX(0.9552);">1. 6. 2025 20:35</span>
<span style="left:788.99px;top:683px;font-size:13.4px;color:#111;transform:scaleX(0.9651);">Odšifrována</span>
<span style="left:254.91px;top:708px;font-size:13.4px;color:#111;transform:scaleX(0.9208);">002</span>
<span style="left:334.80px;top:708px;font-size:13.4px;color:#111;transform:scaleX(0.9526);">Dodavatel - školení 3</span>
<span style="left:539.08px;top:708px;font-size:13.4px;color:#111;transform:scaleX(0.9787);">12345678</span>
<span style="left:639.20px;top:708px;font-size:13.4px;color:#111;transform:scaleX(0.9552);">1. 6. 2025 20:37</span>
<span style="left:788.99px;top:708px;font-size:13.4px;color:#111;transform:scaleX(0.9651);">Odšifrována</span>
<span style="left:254.91px;top:733px;font-size:13.4px;color:#111;transform:scaleX(0.9208);">003</span>
<span style="left:334.80px;top:733px;font-size:13.4px;color:#111;transform:scaleX(0.9526);">Dodavatel - školení 5</span>
<span style="left:539.08px;top:733px;font-size:13.4px;color:#111;transform:scaleX(0.9787);">12345678</span>
<span style="left:639.20px;top:733px;font-size:13.4px;color:#111;transform:scaleX(0.9552);">1. 6. 2025 20:38</span>
<span style="left:788.99px;top:733px;font-size:13.4px;color:#111;transform:scaleX(0.9651);">Odšifrována</span>
<span style="left:254.92px;top:758px;font-size:13.4px;color:#111;transform:scaleX(0.9118);">004</span>
<span style="left:334.80px;top:758px;font-size:13.4px;color:#111;transform:scaleX(0.9526);">Dodavatel - školení 6</span>
<span style="left:539.70px;top:758px;font-size:13.4px;color:#111;transform:scaleX(0.9683);">45359326</span>
<span style="left:639.20px;top:758px;font-size:13.4px;color:#111;transform:scaleX(0.9552);">1. 6. 2025 20:39</span>
<span style="left:788.99px;top:758px;font-size:13.4px;color:#111;transform:scaleX(0.9651);">Odšifrována</span>
<span style="left:254.91px;top:783px;font-size:13.4px;color:#111;transform:scaleX(0.9208);">005</span>
<span style="left:334.80px;top:783px;font-size:13.4px;color:#111;transform:scaleX(0.9526);">Dodavatel - školení 7</span>
<span style="left:539.08px;top:783px;font-size:13.4px;color:#111;transform:scaleX(0.9787);">12345678</span>
<span style="left:639.20px;top:783px;font-size:13.4px;color:#111;transform:scaleX(0.9531);">1. 6. 2025 20:40</span>
<span style="left:788.99px;top:783px;font-size:13.4px;color:#111;transform:scaleX(0.9651);">Odšifrována</span>
<span style="left:254.91px;top:808px;font-size:13.4px;color:#111;transform:scaleX(0.9208);">006</span>
<span style="left:334.80px;top:808px;font-size:13.4px;color:#111;transform:scaleX(0.9526);">Dodavatel - školení 6</span>
<span style="left:539.70px;top:808px;font-size:13.4px;color:#111;transform:scaleX(0.9683);">45359326</span>
<span style="left:639.20px;top:808px;font-size:13.4px;color:#111;transform:scaleX(0.9552);">1. 6. 2025 20:59</span>
<span style="left:789.00px;top:808px;font-size:13.4px;color:#111;transform:scaleX(0.9477);">Otevírání zahájeno</span>
<span style="left:208.82px;top:613px;font-size:13.4px;color:#1f76b6;transform:scaleX(0.9346);">Evidovat nabídku</span>
<span style="left:340.45px;top:613px;font-size:13.4px;color:#e9f5e9;font-weight:700;transform:scaleX(0.8455);">Otevřít nabídky</span>
<span style="left:1371.99px;top:616px;font-size:12px;color:#1f76b6;transform:scaleX(1.0734);-webkit-text-stroke:.3px #1f76b6;">MW</span>
</div></body></html>
